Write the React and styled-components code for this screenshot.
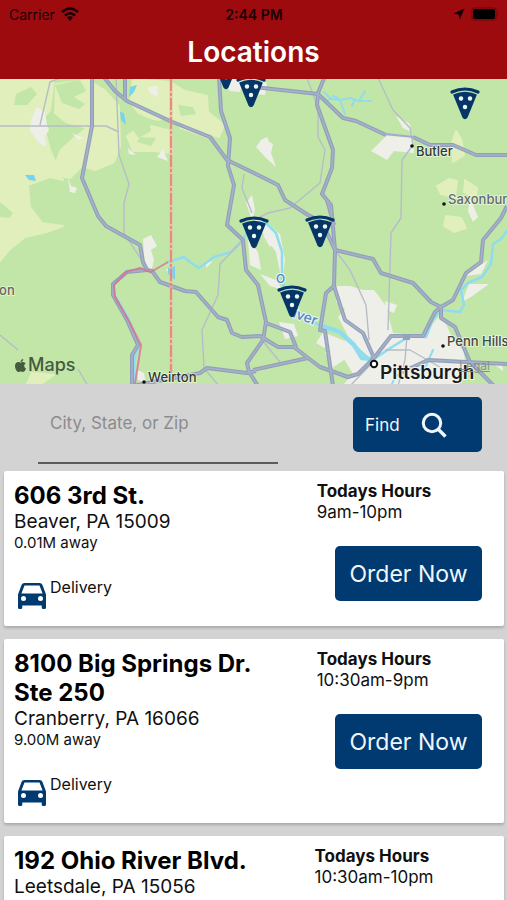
import React from 'react';
import styled, { createGlobalStyle } from 'styled-components';
import { FaApple } from 'react-icons/fa';

const navy = '#003a70';

const GlobalStyle = createGlobalStyle`
  *, *::before, *::after { box-sizing: border-box; }
  body {
    margin: 0;
    background: #d3d3d3;
    color: #101010;
    font-family: Inter, "Liberation Sans", sans-serif;
  }
  button, input { font-family: inherit; }
`;

const Screen = styled.div`
  display: flex;
  flex-direction: column;
  height: 100vh;
  overflow: hidden;
`;

const Header = styled.header`
  flex: none;
  background: #9d0b0f;
`;

const StatusBar = styled.div`
  display: grid;
  grid-template-columns: 1fr auto 1fr;
  align-items: center;
  height: 28px;
  padding: 0 8px 0 9px;
  color: #140203;
  font-size: 14px;
`;

const StatusGroup = styled.div`
  display: flex;
  align-items: center;
  gap: 6px;
  justify-content: ${(p) => (p.$end ? 'flex-end' : 'flex-start')};
`;

const Clock = styled.time`
  font-weight: 600;
`;

const Title = styled.h1`
  margin: 0;
  padding-bottom: 3px;
  color: #fff;
  font-size: 28px;
  font-weight: 600;
  line-height: 48px;
  text-align: center;
`;

const MapArea = styled.section`
  position: relative;
  flex: none;
  height: 305px;
  overflow: hidden;
  background: #c2e6a8;
`;

const MapCanvas = styled.svg`
  display: block;
  width: 100%;
  height: 100%;
`;

const MapBrand = styled.div`
  position: absolute;
  left: 13px;
  bottom: 8px;
  display: flex;
  align-items: center;
  color: #465a3e;
  font-size: 18px;
  font-weight: 500;
  line-height: 22px;
`;

const LegalLink = styled.a`
  position: absolute;
  right: 17px;
  bottom: 10px;
  color: #8b8f8a;
  font-size: 12px;
  line-height: 16px;
`;

const SearchForm = styled.form`
  flex: none;
  display: flex;
  align-items: flex-start;
  justify-content: space-between;
  gap: 24px;
  padding: 0 25px 7px 38px;
`;

const SearchInput = styled.input`
  flex: 0 1 240px;
  min-width: 0;
  height: 80px;
  padding: 0 12px;
  border: 0;
  border-bottom: 2px solid #5c5c5e;
  border-radius: 0;
  outline: none;
  background: transparent;
  color: #222;
  font-size: 17px;
  &::placeholder { color: #8b8b8d; opacity: 1; }
`;

const Button = styled.button`
  display: flex;
  align-items: center;
  justify-content: ${(p) => (p.$wide ? 'center' : 'flex-start')};
  gap: 21px;
  width: ${(p) => (p.$wide ? '147px' : '129px')};
  height: 55px;
  margin-top: ${(p) => (p.$wide ? '23px' : '13px')};
  padding: 0 12px;
  border: 0;
  border-radius: 5px;
  background: ${navy};
  color: #f2f6fa;
  font-size: ${(p) => (p.$wide ? '23px' : '17px')};
  white-space: nowrap;
`;

const Stores = styled.ul`
  display: flex;
  flex-direction: column;
  gap: 13px;
  margin: 0;
  padding: 0 3px 0 4px;
  list-style: none;
`;

const Card = styled.li`
  flex: none;
  display: grid;
  grid-template-columns: 1fr 1fr;
  padding: 10px 10px 12px;
  border-radius: 2px;
  background: #fff;
  box-shadow: 0 2px 3px rgba(0, 0, 0, 0.2);
`;

const Street = styled.h2`
  margin: 0;
  color: #000;
  font-size: 24px;
  font-weight: 700;
  line-height: 29px;
`;

const City = styled.div`
  font-size: 19px;
  line-height: 23px;
`;

const Distance = styled.div`
  font-size: 15px;
  line-height: 20px;
`;

const Service = styled.div`
  display: flex;
  align-items: flex-start;
  gap: 4px;
  margin-top: 25px;
  padding-left: 4px;
  font-size: 16px;
  line-height: 18px;
`;

const CarDrawing = styled.svg`
  flex: none;
  margin: 5px 0;
  color: ${navy};
`;

const OrderColumn = styled.div`
  display: flex;
  flex-direction: column;
  align-items: center;
  button { align-self: flex-end; margin-right: 12px; }
`;

const Hours = styled.div`
  font-size: 17px;
  line-height: 21px;
`;

const HoursTitle = styled.div`
  font-weight: 700;
`;

const highways = [
  'M92 76V126L82 178L98 216L106 226L140 245L143 262L147 270L127 272L113 284V295L127 320L138 345L132 355V386',
  'M103 76L115 91L127 101L170 121L210 137L227 160L254 173L278 185L285 200L308 215L322 222L335 250',
  'M125 76V99',
  'M219 76L221 111L230 138L228 166L234 185L227 225L243 240L246 270L258 285L266 322L263 340L247 363L249 372L258 386',
  'M253 87L318 94L343 118L356 121L386 135',
  'M413 137L430 145H453L476 155H507',
  'M325 76L318 93L317 105L333 150L332 168L322 194L331 205L335 250L334 286L345 320L363 333L374 358',
  'M327 200L334 225',
  'M334 286L326 293L320 330L325 331L333 386',
  'M335 250L373 259L381 273L413 283L431 302L441 307L453 300L466 273L481 262L483 240L501 218L507 206',
  'M441 307L435 312L423 336H391L374 358',
  'M441 307V318L455 327L470 362L494 386',
  'M400 373L428 360L466 362L507 364',
  'M147 270L152 271L160 282L185 291L196 292L218 317L227 320L232 333L242 337L260 336L278 347H296L290 332L266 323',
  'M294 347L308 358L320 367L348 377L358 374L374 358',
  'M253 370L308 358',
  'M132 386L200 373L207 368L247 373L256 371',
];

const minorRoads = [
  'M0 126H106L119 132M40 125L50 82L60 78M116 78L119 155L129 184L124 203V233L148 270',
  'M307 78L318 108V137L325 150L320 183L290 208L268 213L254 220',
  'M378 78L393 110L410 128L413 145L402 160L401 218L391 233L388 330',
  'M244 174L242 188L252 213M243 240L220 264L218 295L202 330L204 368L219 386',
  'M335 250L350 270L366 305L369 340M385 350H410L445 370M0 335L18 350M78 369L88 386',
  'M262 340L280 362M375 360L350 386M407 336L405 360L398 386',
];

const meadows = [
  'M0 79H54L50 110L42 120L50 150L63 180L50 177L28 185L30 207L42 223L63 226L47 232L25 237L9 250L0 261Z',
  'M56 84L88 80L104 90L119 106L120 146L114 162L95 170L82 166L70 178L52 174L60 151L74 138L87 128L66 122L55 113Z',
  'M133 79L170 82L185 91L207 96L208 112L224 125L219 137L204 132L210 138L181 128L171 116L158 120L140 115L130 102Z',
  'M143 124L171 131L172 153L154 151L133 151L127 136Z',
  'M437 186L449 179L457 181L455 197L441 194ZM465 180L477 188L476 198L464 192ZM446 216L461 218L466 228L454 232L444 226Z',
  'M456 131L461 139L464 155L453 162L452 143Z',
  'M32 373L54 375L38 386H26Z',
];

const woods = [
  'M16 94L31 87L37 94L27 105L14 105ZM139 114L149 119L151 131L139 138L132 129ZM0 202L13 213L9 218L0 217Z',
  'M178 105L193 107L196 114L181 116ZM140 137L156 138L151 146L137 142ZM55 85L80 80L86 91L74 97L85 104L79 109L62 103Z',
];

const towns = [
  'M31 120L37 107L45 112L47 125L49 130L45 136L46 147L38 142L30 130ZM68 178L71 186L77 188L75 193L70 192Z',
  'M72 133L84 138L78 140ZM148 87L158 86L157 97L149 92ZM128 148L136 155L129 154ZM163 149L168 161L157 157Z',
  'M221 79L243 79L240 92L230 91ZM256 147L261 140L267 137L269 142L273 144L271 153L276 167L265 157Z',
  'M371 151L386 136L413 137L414 153L394 151L387 160ZM396 116L410 124L411 132L403 128Z',
  'M143 239L151 235L157 246L151 250L154 260L151 272L145 269Z',
  'M252 79L267 83L265 95L255 94ZM470 198L478 217L473 222L468 211Z',
  'M246 203L252 195L255 210L252 220ZM248 240L258 252L261 270L250 265ZM260 274L276 280L283 290L270 286Z',
  'M250 215L266 222L280 234L285 260L282 282L276 252ZM263 235L276 242L270 247ZM279 322L294 324L298 336L285 339Z',
  'M337 286L350 286L363 290L374 290L386 306L393 333L423 336L440 315L447 326L453 340L464 351L466 376L454 386H342L353 374L344 359L316 343L323 332L345 341L348 336L338 317L345 309L336 302Z',
  'M385 301L397 305L394 313L386 310ZM462 302L469 284L489 284L471 297ZM465 276L488 260L481 274Z',
  'M325 352L343 350L344 360L332 368ZM340 347L353 337L359 354ZM495 365L502 363L503 371ZM137 370L144 373L146 383L138 380Z',
  'M166 270L173 265L175 277ZM206 263L213 261L206 268Z',
];

const pins = [
  [226, 72], [251, 90], [465, 102], [254, 231], [320, 230], [292, 300],
];

const places = [
  { name: 'Butler', dot: [412, 146], x: 416, y: 156, color: '#333936' },
  { name: 'Saxonburg', dot: [444, 204], x: 448, y: 204, color: '#626b66' },
  { name: 'Penn Hills', dot: [443, 346], x: 447, y: 346, color: '#424644' },
  { name: 'Weirton', dot: [144, 382], x: 148, y: 382, color: '#303532' },
  { name: 'Canton', x: -30, y: 295, color: '#5f665f' },
];

function PizzaPin({ x, y }) {
  return (
    <g transform={`translate(${x} ${y})`}>
      <path d="M-13-10Q0-16 13-10" fill="none" stroke="#063668" strokeWidth="3.2" strokeLinecap="round" />
      <path d="M-11-7Q0-12 11-7L2 15Q0 18-2 15Z" fill="#063668" stroke="#063668" strokeWidth="1.4" strokeLinejoin="round" />
      <circle cx="-4" cy="-3.5" r="2.2" fill="#f0f8f4" />
      <circle cx="5" cy="-3.5" r="2.2" fill="#f0f8f4" />
      <circle cx="0" cy="5" r="2.2" fill="#f0f8f4" />
    </g>
  );
}

function RegionMap() {
  return (
    <MapCanvas viewBox="0 79 507 305" preserveAspectRatio="xMidYMid slice" role="img" aria-label="Map of store locations near Pittsburgh">
      <path d="M0 79H507V384H0Z" fill="#c2e6a8" />
      {meadows.map((d) => <path key={d} d={d} fill="#e0efbb" strokeLinejoin="round" stroke="#e0efbb" strokeWidth="2" />)}
      {woods.map((d) => <path key={d} d={d} fill="#c2e6a8" />)}
      {towns.map((d) => <path key={d} d={d} fill="#efefe9" />)}
      <g fill="none" stroke="#90dcef" strokeLinejoin="round" strokeLinecap="round">
        <path d="M168 262L184 257L191 263L199 268L214 257L231 252L243 240L250 226L265 222L276 233L282 252L282 278L286 298L298 312L315 323L339 332L354 345L369 359" strokeWidth="2.5" />
        <path d="M322 326L340 332L354 345L362 358L372 359" strokeWidth="4.5" />
        <path d="M374 359L392 347L410 336L426 337L433 319L441 310L460 312L464 305L461 290L468 283L482 277L491 264L493 244L501 239L507 231" strokeWidth="2.5" />
        <path d="M392 384L396 375L408 378L426 366L433 350" strokeWidth="2" />
        <path d="M114 295L128 318L138 345L134 360V384" strokeWidth="3" />
        <path d="M324 92L331 99L340 100L345 114M340 100L350 98L359 101L371 101M359 101L365 91M331 98L325 103M354 101L352 106M338 98L333 96" strokeWidth="2" />
      </g>
      <g fill="#79d3ee">
        <path d="M130 87L137 85L134 92L129 97ZM120 112L124 113L126 125L121 120ZM25 175L34 175L36 181L29 180ZM168 268L175 266L175 280L168 274Z" />
      </g>
      <g fill="none" strokeLinejoin="round">
        {minorRoads.map((d) => <path key={d} d={d} stroke="#b6bdc9" strokeWidth="1.4" />)}
        {highways.map((d) => <path key={d} d={d} stroke="#929fbc" strokeWidth="4" />)}
        {highways.map((d) => <path key={d} d={d} stroke="#a6b2c5" strokeWidth="1.6" />)}
        <path d="M386 134L413 137" stroke="#a4a9d0" strokeWidth="2" />
        <path d="M171 79V374" stroke="#f2b4a0" strokeWidth="3" opacity="0.7" />
        <path d="M171 79V374" stroke="#eb7775" strokeWidth="1.5" strokeDasharray="12 2 3 2" />
        <path d="M168 262L151 272L140 268L126 272L114 285L115 297L130 323L141 345L135 384" stroke="#d77296" strokeWidth="2" opacity="0.8" />
      </g>
      <rect x="403" y="334" width="7" height="6" fill="#8fa3bd" />
      <g fill="#5088bd" fontSize="12" fontWeight="500" stroke="#e5f5f8" strokeWidth="2" paintOrder="stroke">
        <text x="276" y="283">O</text>
        <text x="292" y="317" fontSize="14" transform="rotate(20 292 317)">iver</text>
      </g>
      {places.map((p) => (
        <g key={p.name}>
          {p.dot && <circle cx={p.dot[0]} cy={p.dot[1]} r="1.8" fill="#111" />}
          <text x={p.x} y={p.y} fontSize="13" fontWeight="500" fill={p.color} stroke="#f5faed" strokeWidth="1.6" strokeOpacity="0.8" paintOrder="stroke">{p.name}</text>
        </g>
      ))}
      <circle cx="374" cy="364" r="3.2" fill="#fff" stroke="#111" strokeWidth="2" />
      <text x="380" y="379" fontSize="19" fontWeight="600" fill="#191c1c" stroke="#f5f5ef" strokeWidth="2" paintOrder="stroke">Pittsburgh</text>
      {pins.map(([x, y]) => <PizzaPin key={`${x}-${y}`} x={x} y={y} />)}
    </MapCanvas>
  );
}

function WifiIcon() {
  return (
    <svg width="18" height="14" viewBox="0 0 18 14" aria-hidden="true">
      <g fill="none" stroke="currentColor" strokeWidth="2.5">
        <path d="M1 5Q9-2 17 5" />
        <path d="M4 8.5Q9 4 14 8.5" />
      </g>
      <path d="M6 10.5Q9 8 12 10.5L9 14Z" fill="currentColor" />
    </svg>
  );
}

function ArrowIcon() {
  return (
    <svg width="12" height="12" viewBox="0 0 12 12" aria-hidden="true">
      <path d="M11.5 .5L6.8 11.5L5.5 6.5L.5 5.5Z" fill="currentColor" />
    </svg>
  );
}

function BatteryIcon() {
  return (
    <svg width="28" height="14" viewBox="0 0 28 14" aria-hidden="true">
      <rect x=".8" y=".8" width="24.4" height="12.4" rx="3.5" fill="none" stroke="#780709" strokeWidth="1.2" />
      <rect x="2" y="2" width="22" height="10" rx="2" fill="#000" />
      <path d="M26.5 5Q28.5 7 26.5 9Z" fill="#780709" />
    </svg>
  );
}

function SearchIcon() {
  return (
    <svg width="26" height="26" viewBox="0 0 26 26" fill="none" stroke="currentColor" strokeWidth="3" aria-hidden="true">
      <circle cx="11" cy="11" r="8.7" />
      <path d="M16.5 16.5L24.5 24.5" strokeWidth="3.4" />
    </svg>
  );
}

function CarIcon() {
  return (
    <CarDrawing width="28" height="26" viewBox="0 0 28 26" aria-hidden="true">
      <path
        fill="currentColor"
        fillRule="evenodd"
        d="M6.5 0H21.5Q23.8 0 24.5 2L28 11.5V24.5Q28 26 26.5 26H25.2Q23.7 26 23.7 24.5V22.5H4.3V24.5Q4.3 26 2.8 26H1.5Q0 26 0 24.5V11.5L3.5 2Q4.2 0 6.5 0ZM6.5 2.4L3.4 10.4H24.6L21.5 2.4ZM5.5 13A2.5 2.5 0 1 0 5.5 18A2.5 2.5 0 1 0 5.5 13ZM22.5 13A2.5 2.5 0 1 0 22.5 18A2.5 2.5 0 1 0 22.5 13Z"
      />
    </CarDrawing>
  );
}

const stores = [
  { street: '606 3rd St.', city: 'Beaver, PA 15009', distance: '0.01M away', hours: '9am-10pm' },
  { street: '8100 Big Springs Dr. Ste 250', city: 'Cranberry, PA 16066', distance: '9.00M away', hours: '10:30am-9pm' },
  { street: '192 Ohio River Blvd.', city: 'Leetsdale, PA 15056', hours: '10:30am-10pm' },
];

function StoreCard({ store }) {
  return (
    <Card>
      <div>
        <Street>{store.street}</Street>
        <City>{store.city}</City>
        {store.distance && <Distance>{store.distance}</Distance>}
        <Service>
          <CarIcon />
          <span>Delivery</span>
        </Service>
      </div>
      <OrderColumn>
        <Hours>
          <HoursTitle>Todays Hours</HoursTitle>
          <div>{store.hours}</div>
        </Hours>
        <Button type="button" $wide>Order Now</Button>
      </OrderColumn>
    </Card>
  );
}

export default function App() {
  return (
    <Screen>
      <GlobalStyle />
      <Header>
        <StatusBar>
          <StatusGroup>
            <span>Carrier</span>
            <WifiIcon />
          </StatusGroup>
          <Clock>2:44 PM</Clock>
          <StatusGroup $end>
            <ArrowIcon />
            <BatteryIcon />
          </StatusGroup>
        </StatusBar>
        <Title>Locations</Title>
      </Header>
      <MapArea>
        <RegionMap />
        <MapBrand>
          <FaApple size={15} aria-hidden="true" />
          <span>Maps</span>
        </MapBrand>
        <LegalLink href="#legal">Legal</LegalLink>
      </MapArea>
      <SearchForm onSubmit={(e) => e.preventDefault()}>
        <SearchInput type="text" aria-label="City, State, or Zip" placeholder="City, State, or Zip" />
        <Button type="submit">
          Find
          <SearchIcon />
        </Button>
      </SearchForm>
      <Stores>
        {stores.map((s) => <StoreCard key={s.street} store={s} />)}
      </Stores>
    </Screen>
  );
}
